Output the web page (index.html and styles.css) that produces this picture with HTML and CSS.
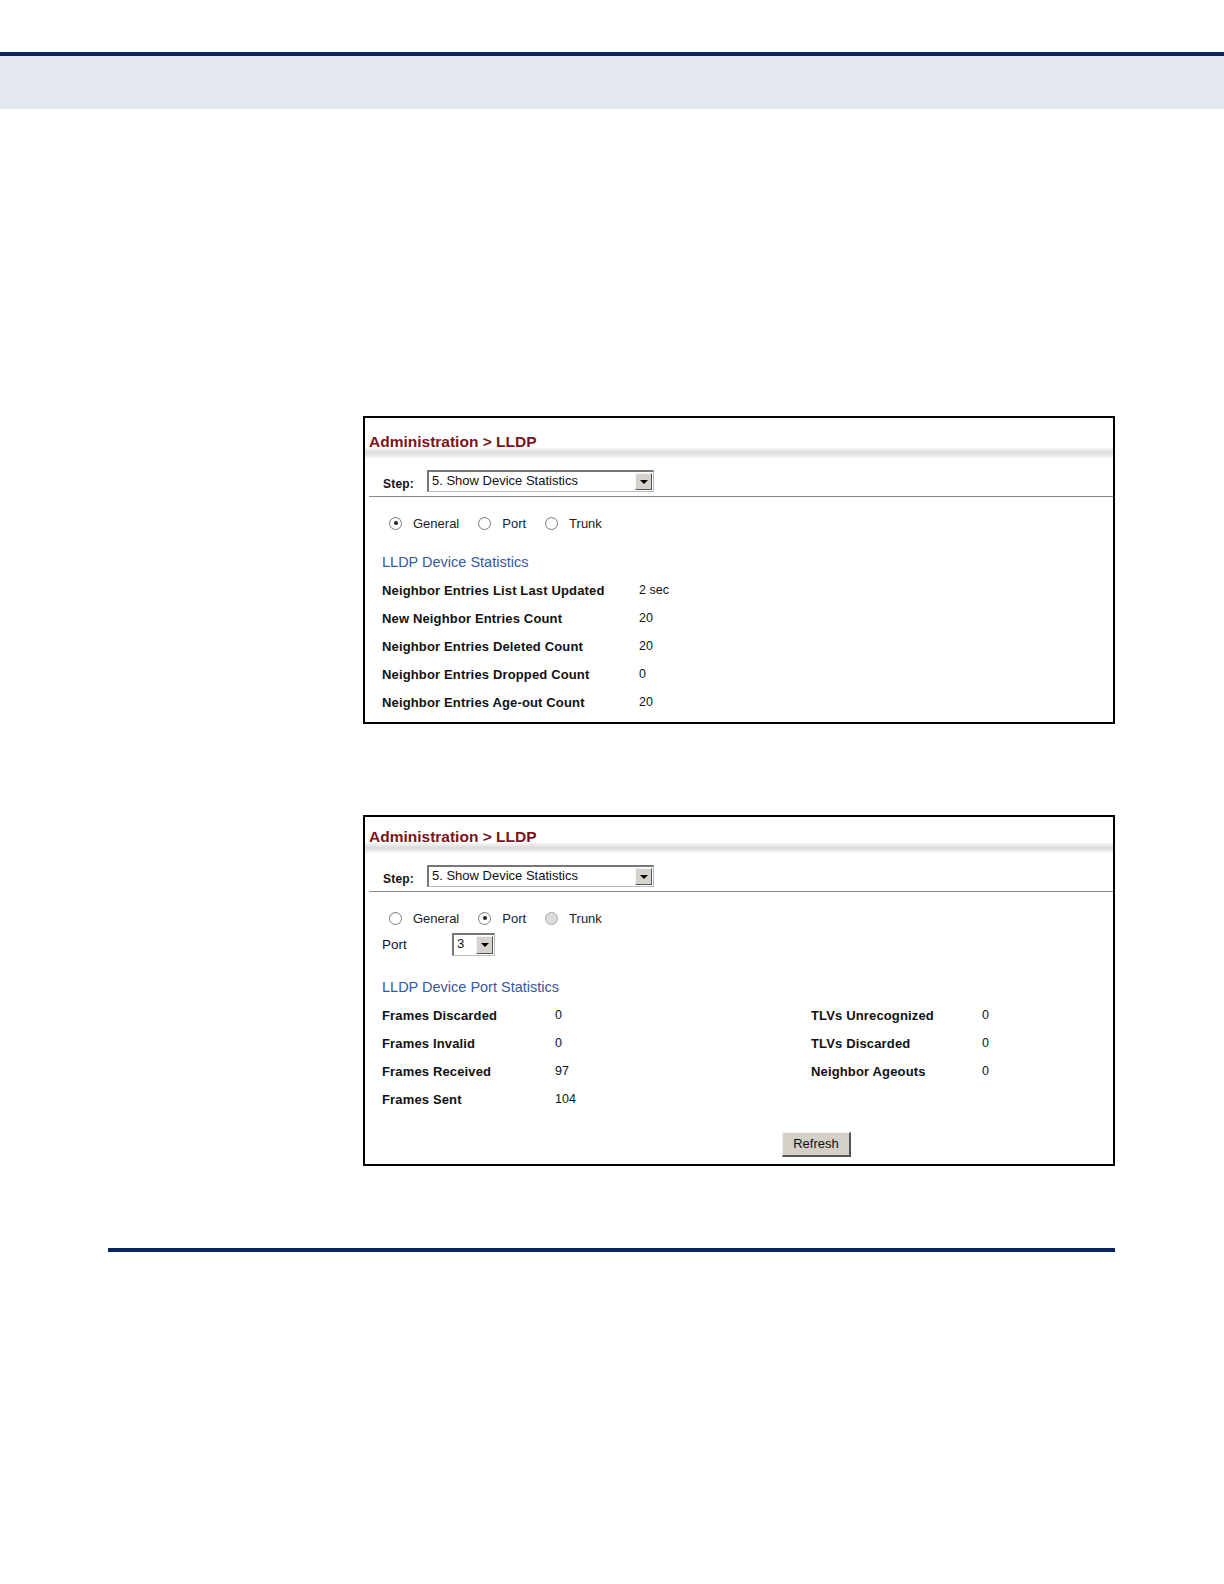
FILE: index.html
```html
<!DOCTYPE html>
<html>
<head>
<meta charset="utf-8">
<link rel="stylesheet" href="styles.css">
</head>
<body>
<div class="topbar"></div>

<div class="panel panel-one">
  <div class="ph">Administration &gt; LLDP</div>
  <div class="shade"></div>
  <div class="step">
    <span class="step-label">Step:</span>
    <span class="select wide"><span class="sel-text">5. Show Device Statistics</span><span class="arrow"><svg width="8" height="4" viewBox="0 0 8 4"><path d="M0 0h8L4 4z" fill="#000"/></svg></span></span>
  </div>
  <div class="body">
    <div class="radios">
      <span class="opt"><span class="radio on"></span>General</span>
      <span class="opt"><span class="radio"></span>Port</span>
      <span class="opt"><span class="radio"></span>Trunk</span>
    </div>
    <div class="heading">LLDP Device Statistics</div>
    <div class="grid g1">
      <span class="lbl">Neighbor Entries List Last Updated</span><span class="val">2 sec</span>
      <span class="lbl">New Neighbor Entries Count</span><span class="val">20</span>
      <span class="lbl">Neighbor Entries Deleted Count</span><span class="val">20</span>
      <span class="lbl">Neighbor Entries Dropped Count</span><span class="val">0</span>
      <span class="lbl">Neighbor Entries Age-out Count</span><span class="val">20</span>
    </div>
  </div>
</div>

<div class="panel panel-two">
  <div class="ph short">Administration &gt; LLDP</div>
  <div class="shade"></div>
  <div class="step">
    <span class="step-label">Step:</span>
    <span class="select wide"><span class="sel-text">5. Show Device Statistics</span><span class="arrow"><svg width="8" height="4" viewBox="0 0 8 4"><path d="M0 0h8L4 4z" fill="#000"/></svg></span></span>
  </div>
  <div class="body">
    <div class="radios">
      <span class="opt"><span class="radio"></span>General</span>
      <span class="opt"><span class="radio on"></span>Port</span>
      <span class="opt"><span class="radio dis"></span>Trunk</span>
    </div>
    <div class="port-row">
      <span class="port-label">Port</span>
      <span class="select narrow"><span class="sel-text">3</span><span class="arrow"><svg width="8" height="4" viewBox="0 0 8 4"><path d="M0 0h8L4 4z" fill="#000"/></svg></span></span>
    </div>
    <div class="heading h2">LLDP Device Port Statistics</div>
    <div class="grid g2">
      <span class="lbl">Frames Discarded</span><span class="val">0</span><span class="lbl">TLVs Unrecognized</span><span class="val">0</span>
      <span class="lbl">Frames Invalid</span><span class="val">0</span><span class="lbl">TLVs Discarded</span><span class="val">0</span>
      <span class="lbl">Frames Received</span><span class="val">97</span><span class="lbl">Neighbor Ageouts</span><span class="val">0</span>
      <span class="lbl">Frames Sent</span><span class="val">104</span><span></span><span></span>
    </div>
    <div class="btn-row"><span class="btn">Refresh</span></div>
  </div>
</div>

<div class="rule"></div>
</body>
</html>
```

FILE: styles.css
```css
html, body {
  margin: 0;
  padding: 0;
  background: #fff;
}
body {
  font-family: "Liberation Sans", Arial, sans-serif;
  color: #111;
  width: 1224px;
  min-height: 1584px;
}
.topbar {
  margin-top: 52px;
  height: 53px;
  border-top: 4px solid #0b2462;
  background: #e4e8f0;
}
.panel {
  margin-left: 363px;
  width: 752px;
  box-sizing: border-box;
  border: 2px solid #000;
  background: #fff;
}
.panel-one {
  margin-top: 307px;
}
.panel-two {
  margin-top: 91px;
}
.ph {
  height: 30px;
  box-sizing: border-box;
  padding: 14px 0 0 4px;
  font-size: 15.5px;
  font-weight: bold;
  line-height: 20px;
  color: #7a1418;
}
.ph.short {
  height: 26px;
  padding-top: 10px;
}
.shade {
  height: 10px;
  background: linear-gradient(to bottom, #f6f6f6 0%, #dcdcdc 45%, #e2e2e2 60%, #f8f8f8 100%);
}
.step {
  margin-left: 4px;
  height: 39px;
  box-sizing: border-box;
  border-bottom: 1px solid #8a8a8a;
  display: flex;
  align-items: flex-end;
  padding: 0 0 4px 14px;
}
.step-label {
  font-size: 12px;
  font-weight: bold;
  line-height: 14px;
  margin: 0 13px 1px 0;
  letter-spacing: 0.2px;
}
.select {
  display: flex;
  align-items: stretch;
  box-sizing: border-box;
  height: 22px;
  border-style: solid;
  border-width: 2px 1px 1px 2px;
  border-color: #777 #bbb #bbb #777;
  background: #fff;
}
.select.wide {
  width: 227px;
}
.select.narrow {
  width: 43px;
  height: 23px;
}
.sel-text {
  flex: 1;
  font-size: 13px;
  line-height: 18px;
  padding-left: 3px;
  color: #111;
  white-space: nowrap;
  overflow: hidden;
}
.arrow {
  width: 17px;
  box-sizing: border-box;
  margin: 1px;
  background: #d6d3ce;
  border-style: solid;
  border-width: 1px;
  border-color: #f4f4f4 #555 #555 #f4f4f4;
  display: flex;
  align-items: center;
  justify-content: center;
}
.body {
  padding-left: 17px;
}
.radios {
  display: flex;
  align-items: center;
  height: 14px;
  margin-top: 19px;
  padding-left: 7px;
  font-size: 13px;
}
.opt {
  display: inline-flex;
  align-items: center;
  margin-right: 19px;
  color: #222;
}
.radio {
  width: 11px;
  height: 11px;
  border: 1px solid #7a7a7a;
  border-radius: 50%;
  background: radial-gradient(circle at 60% 65%, #fff 55%, #e6e6e6 100%);
  margin-right: 11px;
  position: relative;
  box-sizing: content-box;
}
.radio.on::after {
  content: "";
  position: absolute;
  left: 3.5px;
  top: 3.5px;
  width: 4px;
  height: 4px;
  border-radius: 50%;
  background: #222;
}
.radio.dis {
  background: #dcdcdc;
  border-color: #a8a8a8;
}
.heading {
  margin-top: 18px;
  height: 28px;
  line-height: 28px;
  font-size: 14.5px;
  color: #3559a2;
}
.heading.h2 {
  margin-top: 17px;
}
.grid {
  display: grid;
  grid-auto-rows: 28px;
  align-items: center;
  padding-bottom: 6px;
}
.g1 {
  grid-template-columns: 257px 1fr;
}
.g2 {
  grid-template-columns: 173px 256px 171px 1fr;
  padding-bottom: 0;
}
.lbl {
  font-size: 13px;
  font-weight: bold;
  letter-spacing: 0.15px;
  color: #111;
}
.val {
  font-size: 12.5px;
  color: #111;
}
.port-row {
  display: flex;
  align-items: center;
  height: 23px;
  margin-top: 8px;
}
.port-label {
  font-size: 13.5px;
  width: 70px;
  color: #111;
}
.btn-row {
  display: flex;
  padding: 19px 0 7px 400px;
}
.btn {
  width: 69px;
  height: 25px;
  box-sizing: border-box;
  background: #d4d0c8;
  border-style: solid;
  border-width: 1px 2px 2px 1px;
  border-color: #f2f2f2 #555 #555 #f2f2f2;
  font-size: 13px;
  line-height: 21px;
  text-align: center;
  color: #111;
}
.rule {
  margin: 82px 0 0 108px;
  width: 1007px;
  height: 4px;
  background: #0b2462;
}
```
